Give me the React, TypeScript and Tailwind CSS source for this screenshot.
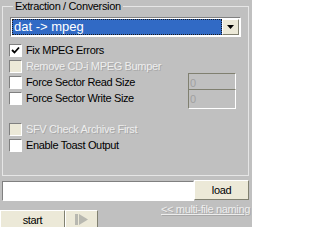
import { useState } from "react";

type Opt = {
  label: string;
  checked?: boolean;
  disabled?: boolean;
};

function Check({ label, checked, disabled }: Opt) {
  return (
    <div className="flex items-center h-[16px]">
      <span
        className={
          "w-[13px] h-[13px] border border-t-[#808080] border-l-[#808080] border-b-white border-r-white flex items-center justify-center " +
          (disabled ? "bg-[#ece9d8]" : "bg-white")
        }
      >
        {checked && (
          <svg width="9" height="9" viewBox="0 0 9 9">
            <path d="M1 4 L3.5 6.5 L8 1.5" stroke="#000" strokeWidth="1.8" fill="none" />
          </svg>
        )}
      </span>
      <span
        className={
          "ml-[4px] leading-[13px] " +
          (disabled ? "text-[#eeeeee] [text-shadow:1px_1px_0_#a8a8a8]" : "text-black")
        }
      >
        {label}
      </span>
    </div>
  );
}

function SizeBox() {
  return (
    <div className="w-[48px] h-[20px] border border-t-[#808070] border-l-[#808070] border-b-white border-r-white bg-[#c0c0c0] text-[#a0a0a0] pl-[1px] leading-[18px]">
      0
    </div>
  );
}

export default function App() {
  const [file, setFile] = useState("");

  return (
    <div className="w-[252px] h-[227px] overflow-hidden bg-[#c0c0c0] text-[11px] tracking-[-0.35px] font-['Liberation_Sans',Arial,sans-serif] text-black">
      <fieldset className="mx-[2px] w-[247px] h-[176px] border border-[#e6e6e6] pl-[7px] pr-[6px]">
        <legend className="ml-[3px] px-[2px] leading-[13px]">Extraction / Conversion</legend>

        <div className="mt-[4px] h-[20px] w-[231px] flex border border-t-[#808080] border-l-[#808080] border-b-white border-r-white bg-white p-[1px]">
          <div className="flex-1 bg-[#316ac5] text-white text-[13px] tracking-normal border border-dotted border-[#1a1a1a] leading-[14px] pl-[1px]">
            dat -&gt; mpeg
          </div>
          <div className="w-[17px] bg-[#ece9d8] border border-t-white border-l-white border-b-[#808070] border-r-[#808070] flex items-center justify-center">
            <svg width="7" height="4" viewBox="0 0 7 4">
              <path d="M0 0 H7 L3.5 4 Z" fill="#000" />
            </svg>
          </div>
        </div>

        <div className="mt-[5px] ml-[-1px] flex">
          <div className="flex flex-col">
            <Check label="Fix MPEG Errors" checked />
            <Check label="Remove CD-i MPEG Bumper" disabled />
            <Check label="Force Sector Read Size" />
            <Check label="Force Sector Write Size" />
            <div className="h-[15px]" />
            <Check label="SFV Check Archive First" disabled />
            <Check label="Enable Toast Output" />
          </div>
          <div className="ml-auto mr-[6px] mt-[31px] flex flex-col">
            <div className="h-[16px] overflow-hidden">
              <SizeBox />
            </div>
            <SizeBox />
          </div>
        </div>
      </fieldset>

      <div className="mt-[5px] flex pl-[2px] pr-[3px]">
        <input
          value={file}
          onChange={(e) => setFile(e.target.value)}
          className="w-[192px] h-[20px] bg-white border border-t-[#808080] border-l-[#808080] border-b-white border-r-white outline-none px-[2px]"
        />
        <button className="w-[55px] h-[20px] bg-[#ece9d8] border border-t-white border-l-white border-b-[#808070] border-r-[#808070] -mt-[1px]">
          load
        </button>
      </div>

      <div className="flex items-start justify-between">
        <div className="flex mt-[9px]">
          <button className="w-[65px] h-[22px] bg-[#ece9d8] border border-t-white border-l-white border-b-[#808070] border-r-[#808070] leading-[16px] pb-[3px]">
            start
          </button>
          <button className="w-[33px] h-[22px] bg-[#ece9d8] border border-t-white border-l-white border-b-[#808070] border-r-[#808070] flex items-start justify-center pt-[3px]">
            <svg width="14" height="11" viewBox="0 0 14 11">
              <rect x="0" y="0" width="3" height="11" fill="#b8b8b0" />
              <path d="M4 0 L13 5.5 L4 11 Z" fill="#b8b8b0" />
            </svg>
          </button>
        </div>
        <span className="mt-[3px] mr-[2px] leading-[10px] underline text-[#eeeeee] [text-shadow:1px_1px_0_#a8a8a8]">
          &lt;&lt; multi-file naming
        </span>
      </div>
    </div>
  );
}
